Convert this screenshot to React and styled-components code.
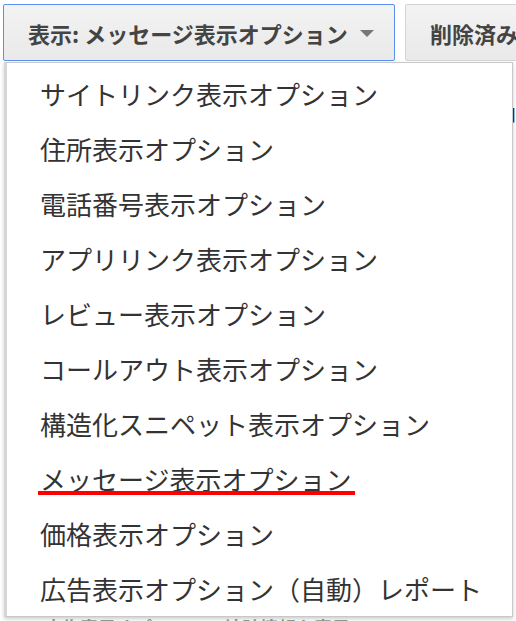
import React from 'react';
import styled, { createGlobalStyle } from 'styled-components';

const GlobalStyle = createGlobalStyle`
  html, body {
    margin: 0;
    padding: 0;
    background: #fff;
    overflow: hidden;
  }
  body {
    font-family: "Noto Sans CJK JP", "Noto Sans", sans-serif;
  }
`;

const Page = styled.div`
  position: relative;
  width: 516px;
  height: 621px;
  overflow: hidden;
`;

const Toolbar = styled.div`
  display: flex;
  gap: 10px;
  padding: 4px 0 0 3px;
  white-space: nowrap;
`;

const ToolButton = styled.div`
  display: flex;
  align-items: center;
  flex-shrink: 0;
  height: 57px;
  box-sizing: border-box;
  padding: 0 24px;
  border: 1px solid ${(p) => (p.$active ? '#5b8ff0' : '#d4d4d4')};
  border-radius: 2px;
  background: linear-gradient(#f3f3f3, #e9e9e9);
  color: #444;
  font-size: 22px;
  font-weight: 700;
  width: ${(p) => p.$width || 'auto'};
`;

const Caret = styled.span`
  width: 0;
  height: 0;
  margin-left: 12px;
  margin-top: 2px;
  border-left: 7px solid transparent;
  border-right: 7px solid transparent;
  border-top: 7px solid #777;
`;

const Behind = styled.div`
  display: flex;
  flex-direction: column;
  padding: 25px 0 0 44px;
`;

const BehindRow = styled.div`
  height: 55px;
  display: flex;
  align-items: ${(p) => (p.$faint ? 'flex-end' : 'center')};
  justify-content: space-between;
  font-size: 18px;
  line-height: 1;
  color: ${(p) => (p.$faint ? '#999' : '#333')};
  font-weight: 700;
  white-space: nowrap;
`;

const Menu = styled.ul`
  position: absolute;
  top: 62px;
  left: 4px;
  width: 509px;
  box-sizing: border-box;
  margin: 0;
  padding: 3px 0 0;
  list-style: none;
  background: #fff;
  border: 1px solid #c8c8c8;
  border-left: 3px solid #d6d6d6;
  box-shadow: 0 2px 4px rgba(0, 0, 0, 0.2);
`;

const Item = styled.li`
  height: 55px;
  display: flex;
  align-items: center;
  padding-left: 33px;
  font-size: 26px;
  color: #333;
  white-space: nowrap;
`;

const Label = styled.span`
  position: relative;
  line-height: 1;

  ${(p) =>
    p.$marked &&
    `
    &::after {
      content: '';
      position: absolute;
      left: -2px;
      right: -4px;
      bottom: -3px;
      height: 4px;
      background: #f00;
    }
  `}
`;

const options = [
  'サイトリンク表示オプション',
  '住所表示オプション',
  '電話番号表示オプション',
  'アプリリンク表示オプション',
  'レビュー表示オプション',
  'コールアウト表示オプション',
  '構造化スニペット表示オプション',
  'メッセージ表示オプション',
  '価格表示オプション',
  '広告表示オプション（自動）レポート',
];

const behind = ['■', '', '', '', '', '', '', '', ''];

export default function App() {
  return (
    <Page>
      <GlobalStyle />
      <Toolbar>
        <ToolButton $active $width="392px">
          表示: メッセージ表示オプション
          <Caret />
        </ToolButton>
        <ToolButton>削除済みのアイテムを表示</ToolButton>
      </Toolbar>
      <Behind>
        {behind.map((t, i) => (
          <BehindRow key={i}>
            <span />
            <span>{t}</span>
          </BehindRow>
        ))}
        <BehindRow $faint>
          <span>広告表示オプションの統計情報を表示</span>
        </BehindRow>
      </Behind>
      <Menu>
        {options.map((o) => (
          <Item key={o}>
            <Label $marked={o === 'メッセージ表示オプション'}>{o}</Label>
          </Item>
        ))}
      </Menu>
    </Page>
  );
}
